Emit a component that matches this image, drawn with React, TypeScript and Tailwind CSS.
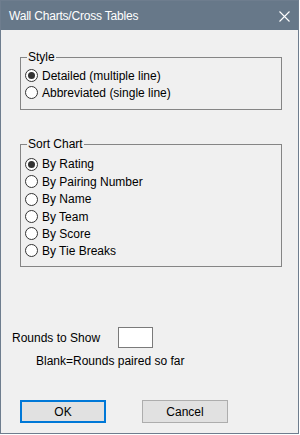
import React from "react";

const font = { fontFamily: '"Liberation Sans", Arial, sans-serif' };

function Radio({ checked, label }: { checked?: boolean; label: string }) {
  return (
    <div className="flex items-center h-full">
      <span className="w-[13px] h-[13px] rounded-full border border-[#333333] bg-white flex items-center justify-center shrink-0">
        {checked && <span className="w-[7px] h-[7px] rounded-full bg-[#333333]" />}
      </span>
      <span className="ml-[4px] text-[12px] leading-[14px] text-black whitespace-nowrap">{label}</span>
    </div>
  );
}

const sortRows = [
  { label: "By Rating", h: "h-[18px]", checked: true },
  { label: "By Pairing Number", h: "h-[17px]" },
  { label: "By Name", h: "h-[18px]" },
  { label: "By Team", h: "h-[17px]" },
  { label: "By Score", h: "h-[17px]" },
  { label: "By Tie Breaks", h: "h-[17px]" },
];

export default function App() {
  return (
    <div style={font} className="w-[299px] h-[434px] border border-[#6e7d8e] bg-[#f0f0f0] flex flex-col">
      <div className="h-[29px] bg-[#677889] flex items-center justify-between pl-[8px] pr-[8px]">
        <span className="text-white text-[12px] tracking-[-0.2px] leading-[14px]">Wall Charts/Cross Tables</span>
        <svg width="11" height="11" viewBox="0 0 11 11" className="mt-[1px]">
          <path d="M0.5 0.5 L10.5 10.5 M10.5 0.5 L0.5 10.5" stroke="white" strokeWidth="1.1" fill="none" />
        </svg>
      </div>

      <div className="flex flex-col">
        <div className="relative ml-[19px] mt-[27px] w-[262px] border border-[#858585] pt-[9px] pb-[8px] pl-[4px]">
          <span className="absolute left-[6px] -top-[8px] px-[1px] bg-[#f0f0f0] text-[12px] leading-[14px] text-black">Style</span>
          <div className="h-[17px]"><Radio checked label="Detailed (multiple line)" /></div>
          <div className="h-[17px]"><Radio label="Abbreviated (single line)" /></div>
        </div>

        <div className="relative ml-[19px] mt-[34px] w-[262px] border border-[#858585] pt-[10px] pb-[7px] pl-[4px]">
          <span className="absolute left-[6px] -top-[8px] px-[1px] bg-[#f0f0f0] text-[12px] leading-[14px] text-black">Sort Chart</span>
          {sortRows.map((r) => (
            <div key={r.label} className={r.h}>
              <Radio checked={r.checked} label={r.label} />
            </div>
          ))}
        </div>

        <div className="mt-[60px] ml-[11px] flex items-center h-[21px]">
          <span className="w-[106px] text-[12px] leading-[14px] text-black">Rounds to Show</span>
          <div className="w-[35px] h-[21px] bg-white border border-[#7a7a7a]" />
        </div>

        <div className="mt-[6px] ml-[35px] text-[12px] leading-[14px] text-black">Blank=Rounds paired so far</div>

        <div className="mt-[32px] ml-[19px] flex items-center">
          <button className="w-[86px] h-[23px] bg-[#e1e1e1] border-2 border-[#0078d7] text-[12px] text-black flex items-center justify-center">OK</button>
          <button className="ml-[36px] w-[86px] h-[23px] bg-[#e1e1e1] border border-[#adadad] text-[12px] text-black flex items-center justify-center">Cancel</button>
        </div>
      </div>
    </div>
  );
}
